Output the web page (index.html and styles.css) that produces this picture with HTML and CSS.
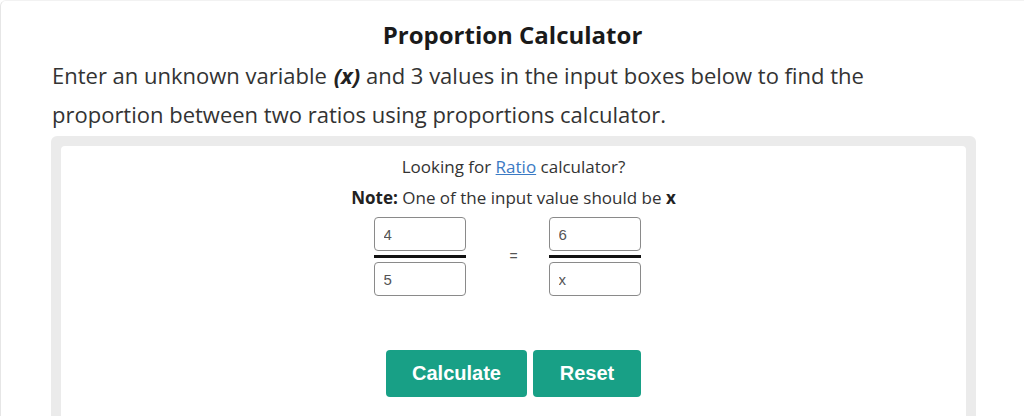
FILE: index.html
```html
<!DOCTYPE html>
<html>
<head>
<meta charset="utf-8">
<link rel="stylesheet" href="styles.css">
</head>
<body>
<div class="page">
  <h1 class="title">Proportion Calculator</h1>
  <p class="intro">Enter an unknown variable <b><i>(x)</i></b> and 3 values in the input boxes below to find the proportion between two ratios using proportions calculator.</p>
  <div class="frame">
    <div class="panel">
      <p class="line">Looking for <a href="#" class="link">Ratio</a> calculator?</p>
      <p class="line note"><b>Note:</b> One of the input value should be <b>x</b></p>
      <div class="equation">
        <div class="fraction">
          <input class="box" type="text" value="4">
          <div class="bar"></div>
          <input class="box" type="text" value="5">
        </div>
        <div class="equals">=</div>
        <div class="fraction">
          <input class="box" type="text" value="6">
          <div class="bar"></div>
          <input class="box" type="text" value="x">
        </div>
      </div>
      <div class="actions">
        <button class="btn btn-calc">Calculate</button>
        <button class="btn btn-reset">Reset</button>
      </div>
    </div>
  </div>
</div>
</body>
</html>
```
FILE: styles.css
```css
html, body {
  margin: 0;
  padding: 0;
  background: #fff;
  height: 100%;
}
body {
  font-family: "Open Sans", "Noto Sans", sans-serif;
  color: #333;
  overflow: hidden;
}
.page {
  border-left: 1px solid #e6e6e6;
  border-top: 1px solid #f2f2f2;
  border-top-left-radius: 6px;
  min-height: 420px;
  box-sizing: border-box;
}
.title {
  margin: 19px 0 0 0;
  font-size: 24px;
  line-height: 30px;
  font-weight: 700;
  text-align: center;
  color: #1a1a1a;
}
.intro {
  margin: 6px 0 0 0;
  padding-left: 51px;
  padding-right: 140px;
  font-size: 22px;
  line-height: 39px;
  color: #333;
}
.intro b {
  color: #222;
  padding-left: 1px;
}
.frame {
  margin: 2px 0 0 50px;
  width: 925px;
  padding: 10px 10px 0 10px;
  box-sizing: border-box;
  background: #ebebeb;
  border-radius: 6px 6px 0 0;
}
.panel {
  background: #fff;
  border-radius: 4px 4px 0 0;
  padding-top: 9px;
  height: 280px;
  text-align: center;
}
.line {
  margin: 0;
  font-size: 17px;
  line-height: 24px;
  color: #333;
}
.note {
  margin-top: 7px;
}
.note b {
  color: #222;
}
.link {
  color: #3b7ac4;
  text-decoration: underline;
}
.equation {
  margin-top: 7px;
  display: flex;
  justify-content: center;
  padding-right: 13px;
}
.fraction {
  width: 92px;
  display: flex;
  flex-direction: column;
}
.box {
  width: 92px;
  height: 34px;
  box-sizing: border-box;
  border: 1px solid #8a8a8a;
  border-radius: 4px;
  padding: 0 9px;
  font-family: "Liberation Sans", Arial, sans-serif;
  font-size: 15px;
  color: #555;
  background: #fff;
  outline: none;
}
.bar {
  height: 3px;
  background: #111;
  margin: 4px 0 4px 0;
}
.equals {
  width: 83px;
  box-sizing: border-box;
  padding-left: 13px;
  font-family: "Liberation Sans", Arial, sans-serif;
  font-size: 14px;
  color: #555;
  line-height: 78px;
}
.actions {
  margin-top: 54px;
  display: flex;
  justify-content: center;
  gap: 6px;
}
.btn {
  height: 47px;
  border: none;
  border-radius: 4px;
  background: #18a086;
  color: #fff;
  font-family: "Liberation Sans", Arial, sans-serif;
  font-weight: 700;
  font-size: 20px;
  padding: 0;
}
.btn-calc {
  width: 141px;
}
.btn-reset {
  width: 108px;
}
```
